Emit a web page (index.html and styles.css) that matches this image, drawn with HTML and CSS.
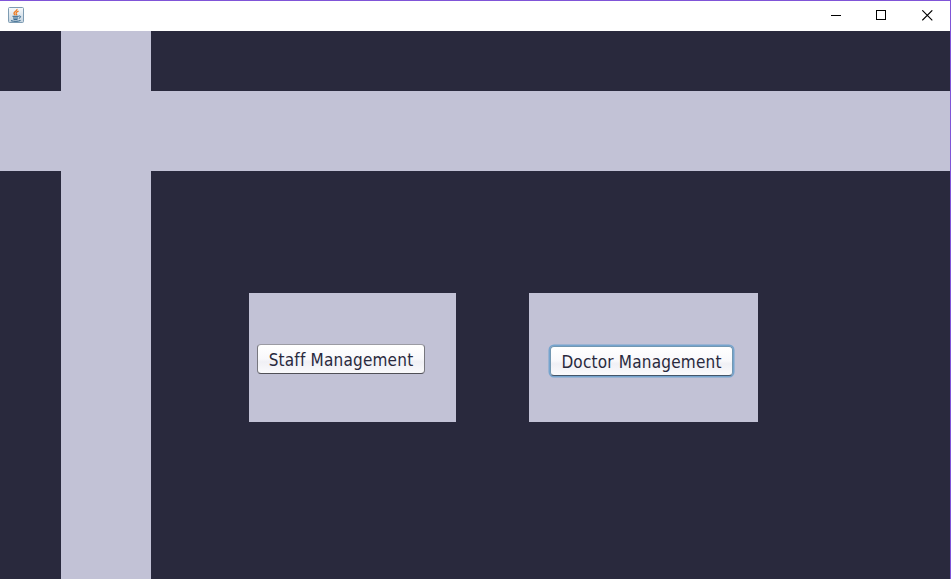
FILE: index.html
```html
<!DOCTYPE html>
<html lang="en">
<head>
<meta charset="utf-8">
<title>Management</title>
<link rel="stylesheet" href="styles.css">
</head>
<body>
<div class="window">
  <header class="titlebar">
    <svg class="app-icon" width="16" height="16" viewBox="0 0 16 16" aria-hidden="true">
      <defs><linearGradient id="tile" x1="0" y1="0" x2="0" y2="1"><stop offset="0" stop-color="#f8fafc"/><stop offset="1" stop-color="#c4d3df"/></linearGradient></defs>
      <rect x=".5" y=".5" width="15" height="15" rx="1" fill="url(#tile)" stroke="#7e9cb3"/>
      <path d="M9 2C9.5 4 5.5 4.5 6 6.5C6.2 7.3 7 7.6 7.3 8.3M10.6 4.2C8.2 5 7.5 6 8.5 7.1C8.9 7.5 8.7 8 8.4 8.3" fill="none" stroke="#ed7b22" stroke-width="1.3"/>
      <path d="M4.5 9.3H10.5M5 11H10M5.5 12.4H9.5M3 13.7C6 14.6 10 14.5 12.5 13.5M10.5 9.2C13.2 8.3 13.3 10.6 10.8 11.3" fill="none" stroke="#2c6089"/>
    </svg>
    <div class="controls">
      <svg width="11" height="11" shape-rendering="crispEdges"><path d="M0 5h10v1H0z"/></svg>
      <svg width="11" height="11" shape-rendering="crispEdges"><path d="M.5 .5h9v9h-9z" fill="none" stroke="#000"/></svg>
      <svg width="11" height="11"><path d="M.3 .3l10 10M10.3 .3l-10 10" fill="none" stroke="#000" stroke-width="1.1"/></svg>
    </div>
  </header>
  <main class="content">
    <div class="column-band"></div>
    <div class="row-band"></div>
    <section class="panels">
      <div class="panel staff"><button class="button">Staff Management</button></div>
      <div class="panel doctor"><button class="button focused">Doctor Management</button></div>
    </section>
  </main>
</div>
</body>
</html>
```
FILE: styles.css
```css
* { box-sizing: border-box; }
body { margin: 0; }
.window {
  display: flex;
  flex-direction: column;
  height: 579px;
  border-top: 1px solid #8055d8;
  border-right: 1px solid #8055d8;
  background: #29293d;
  overflow: hidden;
}
.titlebar {
  flex: 0 0 30px;
  display: flex;
  justify-content: space-between;
  padding: 6px 17px 0 8px;
  background: #fff;
}
.app-icon { display: block; }
.controls { display: flex; gap: 35px; padding-top: 3px; }
.controls svg { display: block; }
.controls svg:first-child { margin-right: -1px; }
.content {
  flex: 1;
  display: grid;
  grid-template-columns: 61px 90px 1fr;
  grid-template-rows: 60px 80px 1fr;
}
.column-band { grid-area: 1 / 2 / 4 / 3; background: #c2c2d6; }
.row-band { grid-area: 2 / 1 / 3 / 4; background: #c2c2d6; }
.panels {
  grid-area: 3 / 3;
  display: flex;
  align-items: flex-start;
  gap: 73px;
  padding: 122px 0 0 98px;
}
.panel { height: 129px; background: #c2c2d6; }
.staff { width: 207px; padding: 51px 0 0 8px; }
.doctor { width: 229px; padding: 53px 0 0 21px; }
.button {
  display: block;
  width: 168px;
  height: 30px;
  padding: 2px 0 0;
  border: 1px solid #77777e;
  border-top-color: #9b9ba3;
  border-bottom-color: #505057;
  border-radius: 4px;
  background: linear-gradient(#fff, #f8f8fb 50%, #f0f0f5 60%, #fafafc);
  color: #29293d;
  font: 17px/26px "DejaVu Sans Condensed", "DejaVu Sans", sans-serif;
  font-stretch: condensed;
  letter-spacing: .2px;
  white-space: nowrap;
}
.focused {
  width: 183px;
  box-shadow: 0 0 0 1.5px #75a4ce;
  border-color: #7297b2;
  border-bottom-color: #45566a;
}
```
